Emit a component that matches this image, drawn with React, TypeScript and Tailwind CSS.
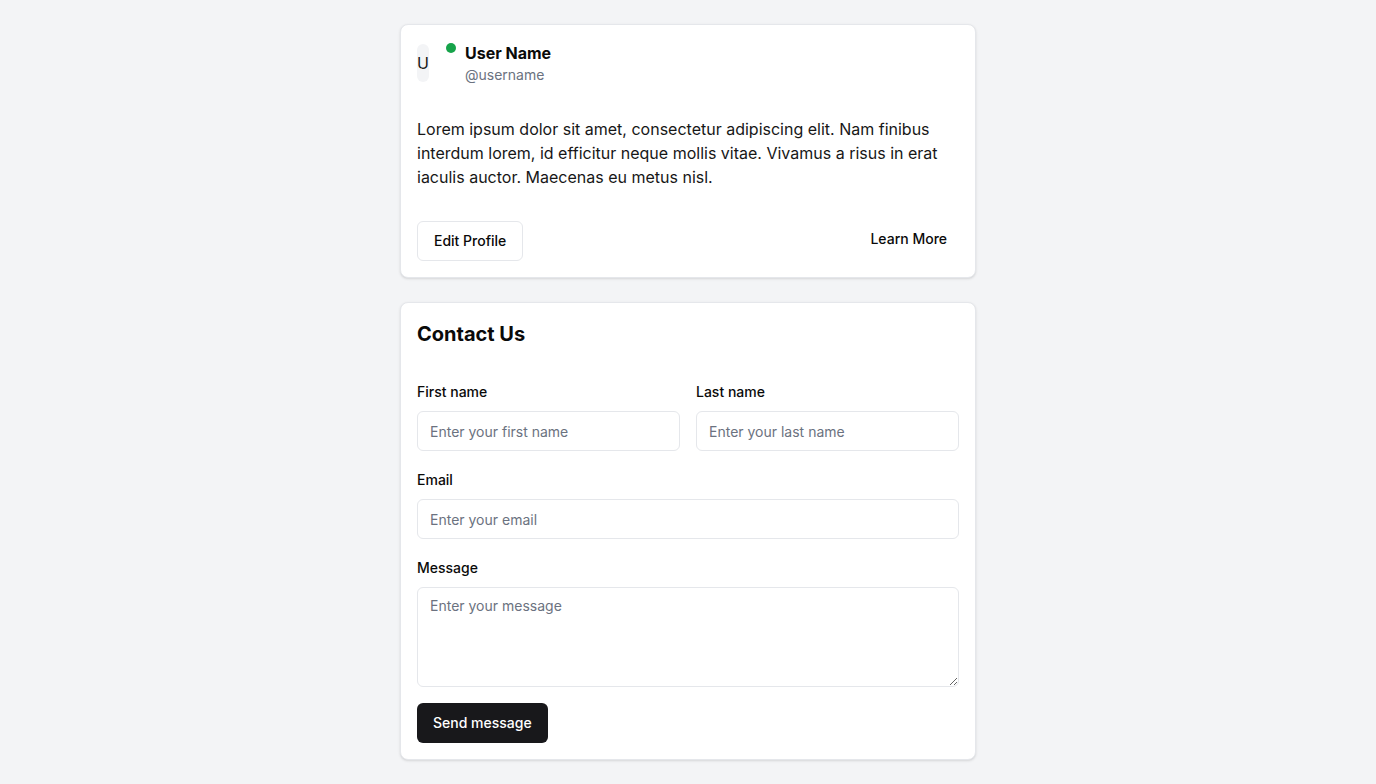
export default function App() {
  return (
    <div className="min-h-screen bg-[#f3f4f6] py-6 font-['Inter',sans-serif] text-[#0a0a0a]">
      <div className="mx-auto flex w-[576px] flex-col gap-6">
        {/* Profile card */}
        <div className="rounded-lg border border-[#e5e7eb] bg-white p-4 shadow-sm">
          <div className="flex items-center">
            <div className="relative flex h-[38px] w-3 items-center justify-center rounded-md bg-[#f3f4f6] text-base text-[#171717]">
              U
            </div>
            <span className="ml-[17px] mt-[-30px] h-2.5 w-2.5 rounded-full bg-[#16a34a]" />
            <div className="ml-[9px] flex flex-col">
              <span className="text-base leading-6 font-bold">User Name</span>
              <span className="text-sm leading-5 text-[#6b7280]">@username</span>
            </div>
          </div>
          <p className="mt-8 text-base leading-6 text-[#171717]">
            Lorem ipsum dolor sit amet, consectetur adipiscing elit. Nam finibus interdum lorem, id efficitur neque mollis vitae. Vivamus a risus in erat iaculis auctor. Maecenas eu metus nisl.
          </p>
          <div className="mt-8 flex items-start justify-between">
            <button className="h-10 rounded-md border border-[#e5e7eb] bg-white px-4 text-sm font-medium">
              Edit Profile
            </button>
            <button className="h-9 rounded-md px-3 text-sm font-medium">Learn More</button>
          </div>
        </div>

        {/* Contact card */}
        <div className="rounded-lg border border-[#e5e7eb] bg-white px-4 pt-[17px] pb-4 shadow-sm">
          <h2 className="text-xl leading-7 font-bold">Contact Us</h2>
          <div className="mt-[31px] flex flex-col gap-4">
            <div className="grid grid-cols-2 gap-4">
              <div className="flex flex-col gap-2">
                <label className="h-6 pt-px text-sm leading-6 font-medium">First name</label>
                <input
                  placeholder="Enter your first name"
                  className="h-10 rounded-md border border-[#e5e7eb] px-3 text-sm placeholder:text-[#6b7280] outline-none"
                />
              </div>
              <div className="flex flex-col gap-2">
                <label className="h-6 pt-px text-sm leading-6 font-medium">Last name</label>
                <input
                  placeholder="Enter your last name"
                  className="h-10 rounded-md border border-[#e5e7eb] px-3 text-sm placeholder:text-[#6b7280] outline-none"
                />
              </div>
            </div>
            <div className="flex flex-col gap-2">
              <label className="h-6 pt-px text-sm leading-6 font-medium">Email</label>
              <input
                placeholder="Enter your email"
                className="h-10 rounded-md border border-[#e5e7eb] px-3 text-sm placeholder:text-[#6b7280] outline-none"
              />
            </div>
            <div className="flex flex-col gap-2">
              <label className="h-6 pt-px text-sm leading-6 font-medium">Message</label>
              <textarea
                placeholder="Enter your message"
                className="h-[100px] rounded-md border border-[#e5e7eb] px-3 py-2 text-sm placeholder:text-[#6b7280] outline-none"
              />
            </div>
            <div>
              <button className="h-10 rounded-md bg-[#18181b] px-4 text-sm font-medium text-white">
                Send message
              </button>
            </div>
          </div>
        </div>
      </div>
    </div>
  );
}
